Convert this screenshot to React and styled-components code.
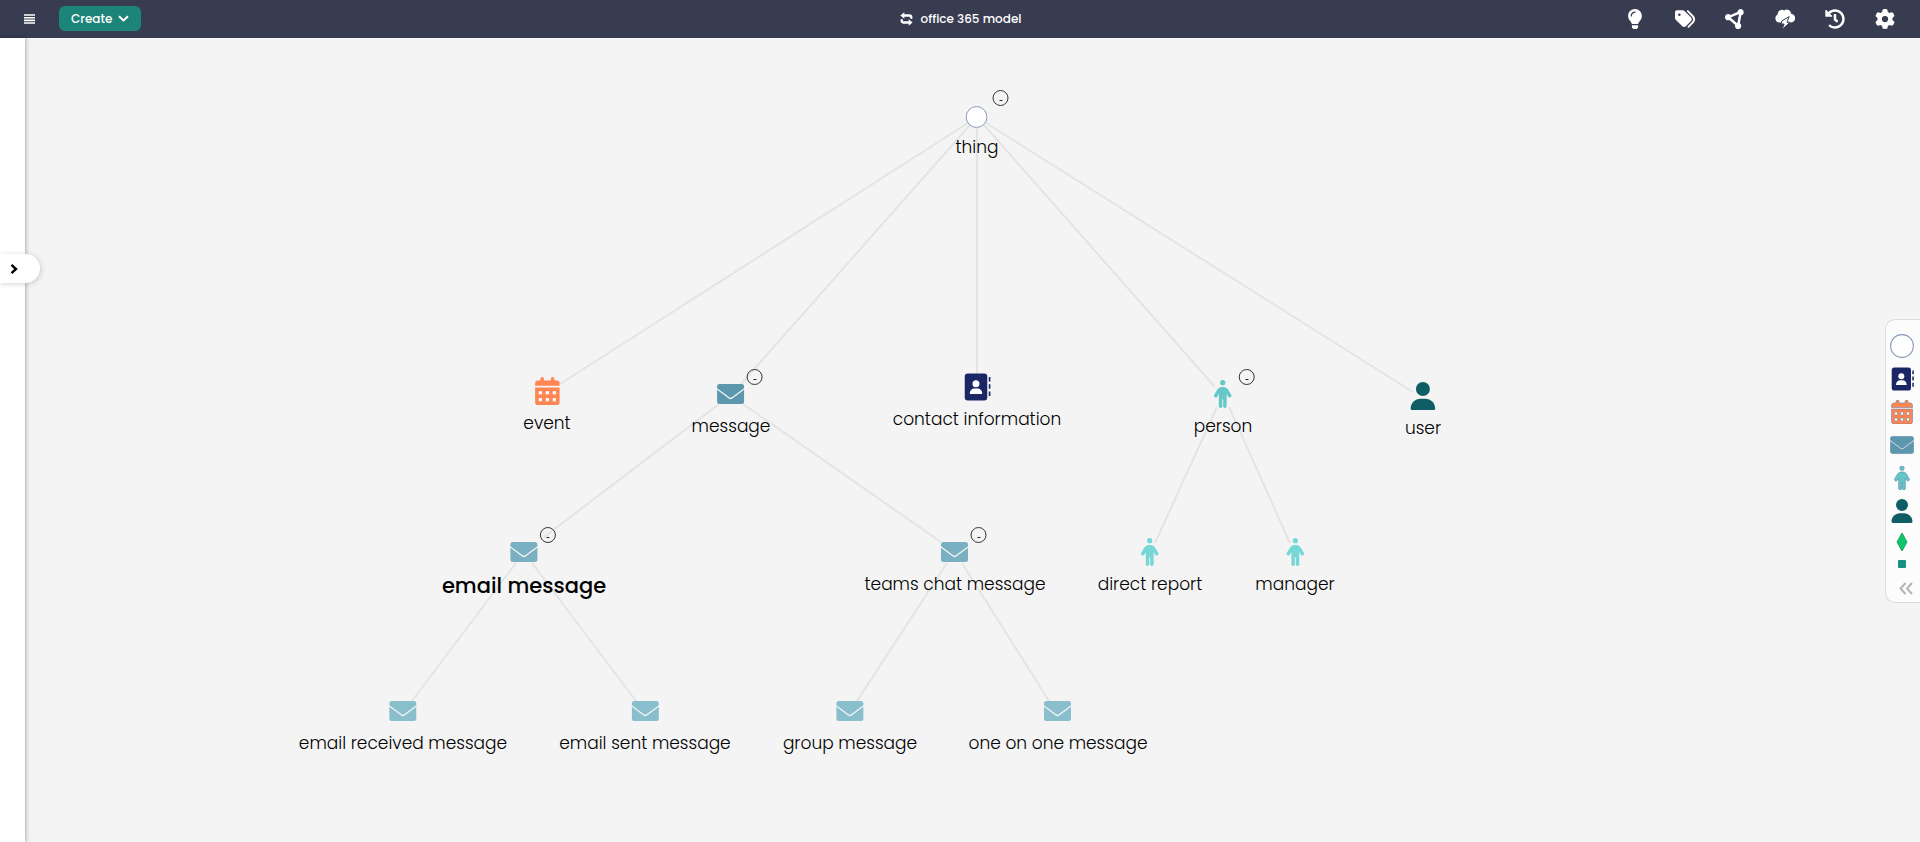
import React from "react";
import styled, { createGlobalStyle } from "styled-components";
import { FaLightbulb, FaHistory } from "react-icons/fa";
import { FaTags, FaGear, FaCircleNodes, FaPerson, FaUser, FaCalendarDays } from "react-icons/fa6";

const GlobalStyle = createGlobalStyle`
  *, *::before, *::after { box-sizing: border-box; }
  body { margin: 0; background: #f4f4f4; }
  body, button { font-family: Poppins, Inter, "Liberation Sans", sans-serif; }
  button { margin: 0; padding: 0; border: 0; background: none; color: inherit; cursor: pointer; }
  svg { display: block; }
`;

const Page = styled.div`
  min-height: 100vh;
  display: flex;
  flex-direction: column;
`;

const TopBar = styled.header`
  display: grid;
  grid-template-columns: 1fr auto 1fr;
  align-items: center;
  height: 38px;
  padding: 0 25px 1px 24px;
  background: #383c50;
  color: #fff;
`;

const BarStart = styled.div`
  display: flex;
  align-items: center;
  gap: 24px;
`;

const CreateButton = styled.button`
  display: flex;
  align-items: center;
  gap: 6px;
  height: 25px;
  padding: 0 12px;
  border-radius: 6px;
  background: #1c8478;
  font-size: 12px;
  font-weight: 500;
`;

const Title = styled.h1`
  display: flex;
  align-items: center;
  gap: 8px;
  margin: 0;
  padding-left: 2px;
  font-size: 12px;
  font-weight: 500;
  line-height: 16px;
`;

const BarActions = styled.nav`
  display: flex;
  justify-content: flex-end;
  gap: 30px;
`;

const IconButton = styled.button`
  display: grid;
  place-items: center;
  min-width: ${(p) => p.$size || 20}px;
  height: 20px;
`;

const Body = styled.main`
  display: flex;
  flex: 1;
`;

const SidePanel = styled.aside`
  position: relative;
  z-index: 1;
  flex: 0 0 25px;
  background: #fff;
  box-shadow: 1px 0 4px rgba(0, 0, 0, 0.3);
`;

const PanelHandle = styled.button`
  position: absolute;
  top: 216px;
  left: 0;
  display: flex;
  align-items: center;
  width: 40px;
  height: 29px;
  padding-left: 9px;
  border-radius: 0 15px 15px 0;
  background: #fff;
  box-shadow: 1px 1px 5px rgba(60, 40, 80, 0.22);
`;

const Canvas = styled.section`
  position: relative;
  flex: 1;
  min-height: 740px;
  overflow: hidden;
`;

const Edges = styled.svg`
  position: absolute;
  top: 0;
  left: 0;
  width: 100%;
  height: 100%;
  fill: none;
  stroke: #e4e4e4;
  stroke-width: 2;
`;

const Node = styled.div`
  position: absolute;
  left: ${(p) => p.$x}px;
  top: ${(p) => p.$y}px;
  display: flex;
  flex-direction: column;
  align-items: center;
  gap: 6px;
  transform: translateX(-50%);
`;

const NodeIcon = styled.div`
  position: relative;
  display: grid;
  place-items: center;
  width: 28px;
  height: ${(p) => (p.$root ? 24 : 28)}px;
  color: ${(p) => p.$color};
`;

const NodeLabel = styled.span`
  color: #000;
  font-size: ${(p) => (p.$selected ? 21 : 17)}px;
  font-weight: ${(p) => (p.$selected ? 500 : 300)};
  line-height: ${(p) => (p.$selected ? 28 : 24)}px;
  white-space: nowrap;
`;

const Collapse = styled.button`
  position: absolute;
  left: 30px;
  top: ${(p) => (p.$root ? -15 : -11)}px;
  display: grid;
  place-items: center;
  width: 16px;
  height: 16px;
  padding-top: 3px;
  border: 1px solid #333;
  border-radius: 50%;
  color: #222;
  font-family: Roboto, sans-serif;
  font-size: 12px;
  line-height: 10px;
`;

const Legend = styled.aside`
  position: absolute;
  right: 0;
  top: 281px;
  display: flex;
  flex-direction: column;
  align-items: center;
  gap: 9px;
  width: 35px;
  height: 284px;
  padding: 14px 2px 0 0;
  border: 1px solid #dcdcdc;
  border-right: 0;
  border-radius: 10px 0 0 10px;
  background: #fcfcfc;
`;

const LegendItem = styled.div`
  display: grid;
  place-items: center;
  height: ${(p) => p.$height || 24}px;
  color: ${(p) => p.$color};

  path {
    ${(p) => p.$outlined && `
      stroke: rgba(80, 120, 160, 0.5);
      stroke-width: 1px;
      vector-effect: non-scaling-stroke;
    `}
  }
`;

const LegendToggle = styled.button`
  align-self: flex-end;
  padding: 3px 5px 0 0;
`;

const MenuIcon = () => (
  <svg width="11" height="10" viewBox="0 0 11 10" stroke="#fff" strokeWidth="1.600" aria-hidden="true">
    <path d="M0 1h11M0 3.700h11M0 6.400h11M0 9h11" />
  </svg>
);

const ChevronDown = () => (
  <svg width="11" height="7" viewBox="0 0 11 7" fill="none" stroke="currentColor" strokeWidth="2" aria-hidden="true">
    <path d="M1 1.200l4.500 4.200L10 1.200" />
  </svg>
);

const ChevronRight = () => (
  <svg width="10" height="12" viewBox="0 0 10 12" fill="none" stroke="#000" strokeWidth="2.400" aria-hidden="true">
    <path d="M2.500 1.800L7 6l-4.500 4.200" />
  </svg>
);

const DoubleChevron = () => (
  <svg width="14" height="13" viewBox="0 0 14 13" fill="none" stroke="#b4b4b4" strokeWidth="2" aria-hidden="true">
    <path d="M6.500 1L1.500 6.500l5 5.500M13 1L8 6.500l5 5.500" />
  </svg>
);

const SyncIcon = () => (
  <svg width="13" height="14" viewBox="0 0 13 14" fill="none" stroke="#fff" strokeWidth="2.300" aria-hidden="true">
    <path d="M3 3.500h6.300a2 2 0 0 1 2 2V6.800M10 10.500H3.700a2 2 0 0 1-2-2V7.200" />
    <path d="M4.300.3v6.400L.4 3.500zM8.700 7.300v6.400l3.900-3.200z" fill="#fff" stroke="none" />
  </svg>
);

const StormIcon = ({ size }) => (
  <svg width={size} height={size} viewBox="0 0 20 20" fill="currentColor" aria-hidden="true">
    <path d="M4.500 13.500A4.200 4.200 0 0 1 2.600 5.600 4.500 4.500 0 0 1 9.300 1.500a4.200 4.200 0 0 1 6.800 3.300 4.300 4.300 0 0 1-.6 8.700z" />
    <path d="M14.200 7.600L6.800 12l-.7 3h3L7 20.500l8.200-7.200h-3.200z" stroke="#383c50" strokeWidth="1" />
  </svg>
);

const Envelope = ({ size = 28 }) => (
  <svg width={size} height={size} viewBox="0 0 28 28" fill="currentColor" aria-hidden="true">
    <path d="M3 4h22a2.500 2.500 0 0 1 2.500 2.500v1.700L15.300 17.200a2.200 2.200 0 0 1-2.600 0L.5 8.200V6.500A2.500 2.500 0 0 1 3 4z" />
    <path d="M.5 9.800l11.700 8.700a3 3 0 0 0 3.600 0L27.500 9.800V21.500A2.500 2.500 0 0 1 25 24H3a2.500 2.500 0 0 1-2.500-2.500z" />
  </svg>
);

const AddressBook = ({ size = 28 }) => (
  <svg width={size} height={size} viewBox="0 0 28 28" aria-hidden="true">
    <rect x="2" y=".5" width="22.500" height="27" rx="3" fill="currentColor" />
    <path d="M26.900 4v4.500M26.900 11.200v4.500M26.900 18.400v4.500" stroke="currentColor" strokeWidth="1.800" />
    <circle cx="13.200" cy="10.700" r="3.500" fill="#fff" />
    <path d="M7 21c0-3.600 2.200-5.500 4.800-5.500h2.900c2.600 0 4.800 1.900 4.800 5.500z" fill="#fff" />
  </svg>
);

const RootCircle = ({ size = 22 }) => (
  <svg width={size} height={size} viewBox="0 0 22 22" aria-hidden="true">
    <circle cx="11" cy="11" r="10.400" fill="#fff" stroke="#8496b4" />
  </svg>
);

const Diamond = () => (
  <svg width="12" height="20" viewBox="0 0 12 20" aria-hidden="true">
    <path d="M6 1l5 9-5 9-5-9z" fill="#0fc46c" stroke="#18a866" />
  </svg>
);

const Square = () => (
  <svg width="8" height="8" viewBox="0 0 8 8" aria-hidden="true">
    <rect width="8" height="8" rx="1" fill="#188f82" />
  </svg>
);

const icons = {
  root: RootCircle,
  event: FaCalendarDays,
  mail: Envelope,
  contact: AddressBook,
  person: FaPerson,
  user: FaUser,
};

const nodes = [
  { label: "thing", icon: "root", x: 952, y: 67, size: 22, open: true },
  { label: "event", icon: "event", color: "#ff8552", x: 522, y: 339, size: 28 },
  { label: "message", icon: "mail", color: "#5b97ad", x: 706, y: 342, size: 28, open: true },
  { label: "contact information", icon: "contact", color: "#1b2764", x: 952, y: 335, size: 28 },
  { label: "person", icon: "person", color: "#65c7c9", x: 1198, y: 342, size: 28, open: true },
  { label: "user", icon: "user", color: "#0f5e65", x: 1398, y: 344, size: 28 },
  { label: "email message", icon: "mail", color: "#79b0c2", x: 499, y: 500, size: 28, open: true, selected: true },
  { label: "teams chat message", icon: "mail", color: "#79b0c2", x: 930, y: 500, size: 28, open: true },
  { label: "direct report", icon: "person", color: "#77d7d7", x: 1125, y: 500, size: 28 },
  { label: "manager", icon: "person", color: "#77d7d7", x: 1270, y: 500, size: 28 },
  { label: "email received message", icon: "mail", color: "#89bfcd", x: 378, y: 659, size: 28 },
  { label: "email sent message", icon: "mail", color: "#89bfcd", x: 620, y: 659, size: 28 },
  { label: "group message", icon: "mail", color: "#89bfcd", x: 825, y: 659, size: 28 },
  { label: "one on one message", icon: "mail", color: "#89bfcd", x: 1033, y: 659, size: 28 },
];

const edges = [
  "M943 85L535 346",
  "M945 87L716 346",
  "M952 90V336",
  "M959 87L1190 349",
  "M961 85L1388 354",
  "M694 366L519 499",
  "M718 366L916 504",
  "M1192 369L1130 505",
  "M1204 369L1265 505",
  "M491 525L387 663",
  "M507 525L611 663",
  "M922 525L832 663",
  "M937 525L1024 663",
];

const actions = [
  { label: "Ideas", Icon: FaLightbulb, size: 20 },
  { label: "Tags", Icon: FaTags, size: 20 },
  { label: "Graph", Icon: FaCircleNodes, size: 20 },
  { label: "Storm", Icon: StormIcon, size: 20 },
  { label: "History", Icon: FaHistory, size: 20 },
  { label: "Settings", Icon: FaGear, size: 20 },
];

const legend = [
  { name: "thing", Icon: RootCircle, size: 24 },
  { name: "contact", Icon: AddressBook, size: 24, color: "#1b2764" },
  { name: "event", Icon: FaCalendarDays, size: 24, color: "#ff8552", outlined: true },
  { name: "message", Icon: Envelope, size: 24, color: "#5b97ad", outlined: true },
  { name: "person", Icon: FaPerson, size: 24, color: "#65c7c9", outlined: true },
  { name: "user", Icon: FaUser, size: 24, color: "#0f5e65" },
  { name: "diamond", Icon: Diamond, height: 17 },
  { name: "square", Icon: Square, height: 12 },
];

export default function App() {
  return (
    <Page>
      <GlobalStyle />
      <TopBar>
        <BarStart>
          <IconButton $size={11} aria-label="Menu"><MenuIcon /></IconButton>
          <CreateButton>Create <ChevronDown /></CreateButton>
        </BarStart>
        <Title><SyncIcon />office 365 model</Title>
        <BarActions>
          {actions.map(({ label, Icon, size }) => (
            <IconButton key={label} aria-label={label}><Icon size={size} /></IconButton>
          ))}
        </BarActions>
      </TopBar>
      <Body>
        <SidePanel>
          <PanelHandle aria-label="Open panel"><ChevronRight /></PanelHandle>
        </SidePanel>
        <Canvas>
          <Edges aria-hidden="true">
            {edges.map((d) => <path key={d} d={d} />)}
          </Edges>
          {nodes.map((n) => {
            const Icon = icons[n.icon];
            const root = n.icon === "root";
            return (
              <Node key={n.label} $x={n.x} $y={n.y}>
                <NodeIcon $color={n.color} $root={root}>
                  <Icon size={n.size} />
                  {n.open && <Collapse $root={root} aria-label={`Collapse ${n.label}`}>-</Collapse>}
                </NodeIcon>
                <NodeLabel $selected={n.selected}>{n.label}</NodeLabel>
              </Node>
            );
          })}
          <Legend>
            {legend.map(({ name, Icon, size, color, height, outlined }) => (
              <LegendItem key={name} $color={color} $height={height} $outlined={outlined}><Icon size={size} /></LegendItem>
            ))}
            <LegendToggle aria-label="Expand legend"><DoubleChevron /></LegendToggle>
          </Legend>
        </Canvas>
      </Body>
    </Page>
  );
}
